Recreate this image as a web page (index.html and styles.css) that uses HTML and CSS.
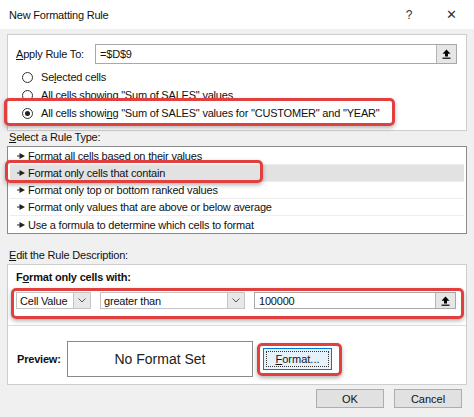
FILE: index.html
```html
<!DOCTYPE html>
<html lang="en">
  <head>
    <meta charset="UTF-8" />
    <meta name="viewport" content="width=device-width, initial-scale=1.0" />
    <title>New Formatting Rule</title>
    <link rel="stylesheet" href="styles.css">
  </head>
  <body>
    <header class="titlebar">
      <span class="title">New Formatting Rule</span>
      <span class="title-btn">?</span>
      <span class="title-btn close">&#x2715;</span>
    </header>

    <main class="content">
      <!-- apply rule to -->
      <section class="apply-group">
        <div class="apply-row">
          <span class="apply-label"><u>A</u>pply Rule To:</span>
          <div class="ref-input">
            <span class="ref-text">=$D$9</span>
            <span class="ref-btn">
              <svg width="9" height="10" viewBox="0 0 9 10"><path d="M4.5 0.5 L8.5 4.8 H6 V7.5 H3 V4.8 H0.5 Z" fill="#000"/><rect x="0.5" y="8.6" width="8" height="1.2" fill="#000"/></svg>
            </span>
          </div>
        </div>
        <div class="radio-row"><span class="radio"></span>Se<u>l</u>ected cells</div>
        <div class="radio-row"><span class="radio"></span>All cells showi<u>n</u>g "Sum of SALES" values</div>
        <div class="radio-row"><span class="radio checked"></span>All cells showi<u>n</u>g "Sum of SALES" values for "CUSTOMER" and "YEAR"</div>
      </section>

      <!-- rule type -->
      <div class="section-label"><u>S</u>elect a Rule Type:</div>
      <ul class="rule-list">
        <li><svg class="pointer" width="8" height="6" viewBox="0 0 8 6"><rect x="0" y="2.5" width="3" height="1" fill="#222"/><path d="M2.5 0 L8 3 L2.5 6 Z" fill="#222"/></svg>Format all cells based on their values</li>
        <li class="selected"><svg class="pointer" width="8" height="6" viewBox="0 0 8 6"><rect x="0" y="2.5" width="3" height="1" fill="#222"/><path d="M2.5 0 L8 3 L2.5 6 Z" fill="#222"/></svg>Format only cells that contain</li>
        <li><svg class="pointer" width="8" height="6" viewBox="0 0 8 6"><rect x="0" y="2.5" width="3" height="1" fill="#222"/><path d="M2.5 0 L8 3 L2.5 6 Z" fill="#222"/></svg>Format only top or bottom ranked values</li>
        <li><svg class="pointer" width="8" height="6" viewBox="0 0 8 6"><rect x="0" y="2.5" width="3" height="1" fill="#222"/><path d="M2.5 0 L8 3 L2.5 6 Z" fill="#222"/></svg>Format only values that are above or below average</li>
        <li><svg class="pointer" width="8" height="6" viewBox="0 0 8 6"><rect x="0" y="2.5" width="3" height="1" fill="#222"/><path d="M2.5 0 L8 3 L2.5 6 Z" fill="#222"/></svg>Use a formula to determine which cells to format</li>
      </ul>

      <!-- rule description -->
      <div class="section-label edit-label"><u>E</u>dit the Rule Description:</div>
      <section class="desc-group">
        <div class="desc-top">
          <div class="bold-label">F<u>o</u>rmat only cells with:</div>
          <div class="cond-row">
            <div class="combo combo-value">
              <span class="combo-text">Cell Value</span>
              <span class="combo-btn"><svg width="8" height="5" viewBox="0 0 8 5"><path d="M0.5 0.5 L4 4 L7.5 0.5" fill="none" stroke="#555" stroke-width="1"/></svg></span>
            </div>
            <div class="combo combo-op">
              <span class="combo-text">greater than</span>
              <span class="combo-btn"><svg width="8" height="5" viewBox="0 0 8 5"><path d="M0.5 0.5 L4 4 L7.5 0.5" fill="none" stroke="#555" stroke-width="1"/></svg></span>
            </div>
            <div class="ref-input value-input">
              <span class="ref-text">100000</span>
              <span class="ref-btn">
                <svg width="9" height="10" viewBox="0 0 9 10"><path d="M4.5 0.5 L8.5 4.8 H6 V7.5 H3 V4.8 H0.5 Z" fill="#000"/><rect x="0.5" y="8.6" width="8" height="1.2" fill="#000"/></svg>
              </span>
            </div>
          </div>
        </div>
        <div class="preview-row">
          <span class="bold-label preview-label">Preview:</span>
          <div class="preview-box">No Format Set</div>
          <button class="btn format-btn"><u>F</u>ormat...</button>
        </div>
      </section>

      <footer class="actions">
        <button class="btn">OK</button>
        <button class="btn">Cancel</button>
      </footer>
    </main>

    <!-- red highlight marks -->
    <div class="mark mark-radio"></div>
    <div class="mark mark-rule"></div>
    <div class="mark mark-cond"></div>
    <div class="mark mark-format"></div>
  </body>
</html>
```

FILE: styles.css
```css
* {
  margin: 0;
  padding: 0;
  box-sizing: border-box;
}

body {
  width: 474px;
  height: 417px;
  overflow: hidden;
  position: relative;
  background: #f0f0f0;
  font-family: "Liberation Sans", Arial, sans-serif;
  font-size: 11px;
  letter-spacing: -0.2px;
  color: #111;
}

u {
  text-underline-offset: 1px;
}

.titlebar {
  height: 29px;
  background: #fff;
  display: flex;
  align-items: center;
  padding-left: 9px;
  padding-right: 2px;
}

.title {
  flex: 1;
  font-size: 11px;
  color: #111;
}

.title-btn {
  width: 42px;
  text-align: center;
  font-size: 12px;
  color: #333;
}

.title-btn.close {
  font-size: 13px;
}

.content {
  padding: 5px 7px 0;
}

/* apply group */
.apply-group {
  height: 97px;
  background: #fff;
  border: 1px solid #cdcdcd;
  padding: 9px 9px 0 8px;
}

.apply-row {
  display: flex;
  align-items: center;
  height: 20px;
}

.apply-label {
  width: 79px;
}

.ref-input {
  flex: 1;
  height: 20px;
  display: flex;
  align-items: center;
  border: 1px solid #a8a8a8;
  background: #fff;
}

.ref-text {
  flex: 1;
  padding-left: 4px;
}

.ref-btn {
  width: 20px;
  height: 18px;
  display: flex;
  align-items: center;
  justify-content: center;
  background: #e6e6e6;
  border-left: 1px solid #b5b5b5;
}

.radio-row {
  height: 18px;
  display: flex;
  align-items: center;
  padding-left: 6px;
}

.apply-row + .radio-row {
  margin-top: 4px;
}

.radio {
  width: 11px;
  height: 11px;
  border: 1px solid #333;
  border-radius: 50%;
  margin-right: 8px;
  display: flex;
  align-items: center;
  justify-content: center;
}

.radio.checked::after {
  content: "";
  width: 5px;
  height: 5px;
  border-radius: 50%;
  background: #222;
}

/* rule type list */
.section-label {
  height: 15px;
  line-height: 13px;
  padding-left: 2px;
}

.edit-label {
  margin-top: 15px;
}

.rule-list {
  list-style: none;
  height: 88px;
  background: #fff;
  border: 1px solid #8a8a8a;
  padding: 1px 2px;
}

.rule-list li {
  height: 17px;
  display: flex;
  align-items: center;
  padding-left: 7px;
  border-bottom: 1px solid #ededed;
}

.rule-list li:last-child {
  border-bottom: none;
}

.rule-list li.selected {
  background: #e2e2e2;
}

.pointer {
  margin-right: 3px;
}

/* rule description */
.desc-group {
  height: 121px;
  background: #fff;
  border: 1px solid #cdcdcd;
}

.desc-top {
  padding: 6px 10px 0 8px;
  height: 61px;
  border-bottom: 1px solid #dcdcdc;
}

.bold-label {
  font-weight: bold;
  line-height: 13px;
}

.cond-row {
  display: flex;
  gap: 9px;
  margin-top: 8px;
}

.combo {
  height: 17px;
  display: flex;
  align-items: center;
  border: 1px solid #c4c4c4;
}

.combo-value {
  width: 75px;
}

.combo-op {
  width: 145px;
}

.combo-text {
  flex: 1;
  padding-left: 3px;
}

.combo-btn {
  width: 17px;
  height: 15px;
  display: flex;
  align-items: center;
  justify-content: center;
  background: #e8e8e8;
  border-left: 1px solid #c4c4c4;
}

.value-input {
  height: 17px;
}

.value-input .ref-btn {
  height: 15px;
}

.preview-row {
  display: flex;
  align-items: center;
  padding: 15px 0 0 9px;
}

.preview-label {
  width: 50px;
}

.preview-box {
  width: 186px;
  height: 36px;
  border: 1px solid #8a8a8a;
  display: flex;
  align-items: center;
  justify-content: center;
  font-size: 14px;
  letter-spacing: 0;
  color: #222;
}

.btn {
  font-family: inherit;
  font-size: 11px;
  color: #111;
  height: 19px;
  width: 68px;
  background: #e1e1e1;
  border: 1px solid #adadad;
}

.format-btn {
  margin-left: 10px;
  width: 69px;
  height: 22px;
  background: #e5f1fb;
  border: 1px solid #0078d7;
  outline: 1px dotted #333;
  outline-offset: -4px;
}

.actions {
  display: flex;
  justify-content: flex-end;
  gap: 10px;
  margin-top: 4px;
  padding-right: 5px;
}

/* red annotation boxes */
.mark {
  position: absolute;
  border: 3px solid #e2403f;
  border-radius: 5px;
  box-shadow: 0 2px 4px rgba(0, 0, 0, 0.3);
}

.mark-radio {
  left: 4px;
  top: 98px;
  width: 391px;
  height: 28px;
}

.mark-rule {
  left: 5px;
  top: 160px;
  width: 258px;
  height: 23px;
}

.mark-cond {
  left: 11px;
  top: 288px;
  width: 453px;
  height: 31px;
}

.mark-format {
  left: 257px;
  top: 343px;
  width: 85px;
  height: 33px;
}
```
